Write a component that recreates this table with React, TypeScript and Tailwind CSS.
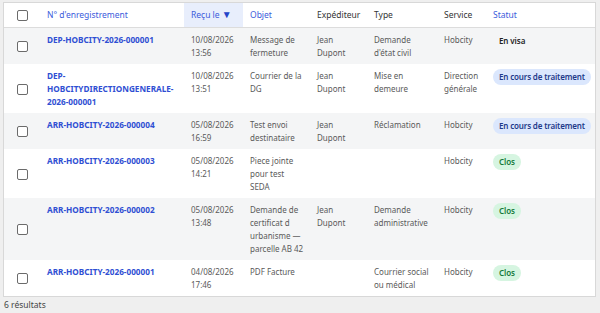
import React from "react";

type Row = {
  id: string[];
  date: string[];
  objet: string[];
  exp: string[];
  type: string[];
  service: string[];
  statut: "visa" | "cours" | "clos";
};

const rows: Row[] = [
  {
    id: ["DEP-HOBCITY-2026-000001"],
    date: ["10/08/2026", "13:56"],
    objet: ["Message de", "fermeture"],
    exp: ["Jean", "Dupont"],
    type: ["Demande", "d'état civil"],
    service: ["Hobcity"],
    statut: "visa",
  },
  {
    id: ["DEP-", "HOBCITYDIRECTIONGENERALE-", "2026-000001"],
    date: ["10/08/2026", "13:51"],
    objet: ["Courrier de la", "DG"],
    exp: ["Jean", "Dupont"],
    type: ["Mise en", "demeure"],
    service: ["Direction", "générale"],
    statut: "cours",
  },
  {
    id: ["ARR-HOBCITY-2026-000004"],
    date: ["05/08/2026", "16:59"],
    objet: ["Test envoi", "destinataire"],
    exp: ["Jean", "Dupont"],
    type: ["Réclamation"],
    service: ["Hobcity"],
    statut: "cours",
  },
  {
    id: ["ARR-HOBCITY-2026-000003"],
    date: ["05/08/2026", "14:21"],
    objet: ["Piece jointe", "pour test", "SEDA"],
    exp: [],
    type: [],
    service: ["Hobcity"],
    statut: "clos",
  },
  {
    id: ["ARR-HOBCITY-2026-000002"],
    date: ["05/08/2026", "13:48"],
    objet: ["Demande de", "certificat d", "urbanisme —", "parcelle AB 42"],
    exp: ["Jean", "Dupont"],
    type: ["Demande", "administrative"],
    service: ["Hobcity"],
    statut: "clos",
  },
  {
    id: ["ARR-HOBCITY-2026-000001"],
    date: ["04/08/2026", "17:46"],
    objet: ["PDF Facture"],
    exp: [],
    type: ["Courrier social", "ou médical"],
    service: ["Hobcity"],
    statut: "clos",
  },
];

function Lines({ lines }: { lines: string[] }) {
  return (
    <>
      {lines.map((l, i) => (
        <React.Fragment key={i}>
          {i > 0 && <br />}
          {l}
        </React.Fragment>
      ))}
    </>
  );
}

function Box() {
  return (
    <span className="inline-block w-[11px] h-[11px] rounded-[2px] border-[1.5px] border-[#6b6b6b] bg-white align-middle" />
  );
}

function Badge({ s }: { s: Row["statut"] }) {
  if (s === "visa")
    return (
      <span className="inline-block rounded-full px-[6px] leading-[16px] font-semibold tracking-[-0.1px] text-[#1f1f1f]">
        En visa
      </span>
    );
  if (s === "cours")
    return (
      <span className="inline-block rounded-full px-[6px] leading-[16px] font-semibold tracking-[-0.15px] bg-[#dbe7fd] text-[#1e3a8a] whitespace-nowrap">
        En cours de traitement
      </span>
    );
  return (
    <span className="inline-block rounded-full px-[6px] leading-[16px] font-semibold tracking-[-0.1px] bg-[#d6f5e1] text-[#157a3c]">
      Clos
    </span>
  );
}

export default function App() {
  return (
    <div
      className="w-[600px] h-[313px] bg-[#efefef] pt-[2px] pl-[3px] pr-[4px] overflow-hidden text-[8px] leading-[13px]"
      style={{ fontFamily: '"Noto Sans", "Open Sans", sans-serif' }}
    >
      <div className="border border-[#d8d8d8] bg-white">
        <table className="w-[591px] table-fixed border-collapse">
          <colgroup>
            <col className="w-[36px]" />
            <col className="w-[144px]" />
            <col className="w-[59px]" />
            <col className="w-[67px]" />
            <col className="w-[57px]" />
            <col className="w-[70px]" />
            <col className="w-[49px]" />
            <col className="w-[109px]" />
          </colgroup>
          <thead>
            <tr className="h-[24px] border-b border-[#dcdcdc] text-left text-[8.5px]">
              <th className="text-center align-middle font-normal">
                <Box />
              </th>
              <th className="px-[7px] font-normal text-[#3b5bdb]">N° d'enregistrement</th>
              <th className="px-[7px] font-normal text-[#3b5bdb] bg-[#e8eefc] whitespace-nowrap">
                Reçu le <span className="text-[#2445c8] text-[10px]">▼</span>
              </th>
              <th className="px-[7px] font-normal text-[#3b5bdb]">Objet</th>
              <th className="px-[7px] font-normal text-[#333]">Expéditeur</th>
              <th className="px-[7px] font-normal text-[#333]">Type</th>
              <th className="px-[7px] font-normal text-[#333]">Service</th>
              <th className="px-[7px] font-normal text-[#3b5bdb]">Statut</th>
            </tr>
          </thead>
          <tbody className="text-[#5a5a5a]">
            {rows.map((r, i) => (
              <tr key={i} className={i % 2 === 0 ? "bg-[#f4f5f6]" : "bg-white"}>
                <td className="text-center align-middle">
                  <Box />
                </td>
                <td className="px-[7px] pt-[5px] pb-[5px] align-top font-bold text-[8.2px] text-[#2f4fd3] whitespace-nowrap">
                  <Lines lines={r.id} />
                </td>
                <td className="px-[7px] pt-[5px] pb-[5px] align-top whitespace-nowrap">
                  <Lines lines={r.date} />
                </td>
                <td className="px-[7px] pt-[5px] pb-[5px] align-top whitespace-nowrap">
                  <Lines lines={r.objet} />
                </td>
                <td className="px-[7px] pt-[5px] pb-[5px] align-top whitespace-nowrap">
                  <Lines lines={r.exp} />
                </td>
                <td className="px-[7px] pt-[5px] pb-[5px] align-top whitespace-nowrap">
                  <Lines lines={r.type} />
                </td>
                <td className="px-[7px] pt-[5px] pb-[5px] align-top whitespace-nowrap">
                  <Lines lines={r.service} />
                </td>
                <td className="px-[7px] pt-[5px] pb-[3px] align-top">
                  <Badge s={r.statut} />
                </td>
              </tr>
            ))}
          </tbody>
        </table>
      </div>
      <div className="pt-[1px] pl-[1px] text-[8.5px] text-[#444]">6 résultats</div>
    </div>
  );
}
